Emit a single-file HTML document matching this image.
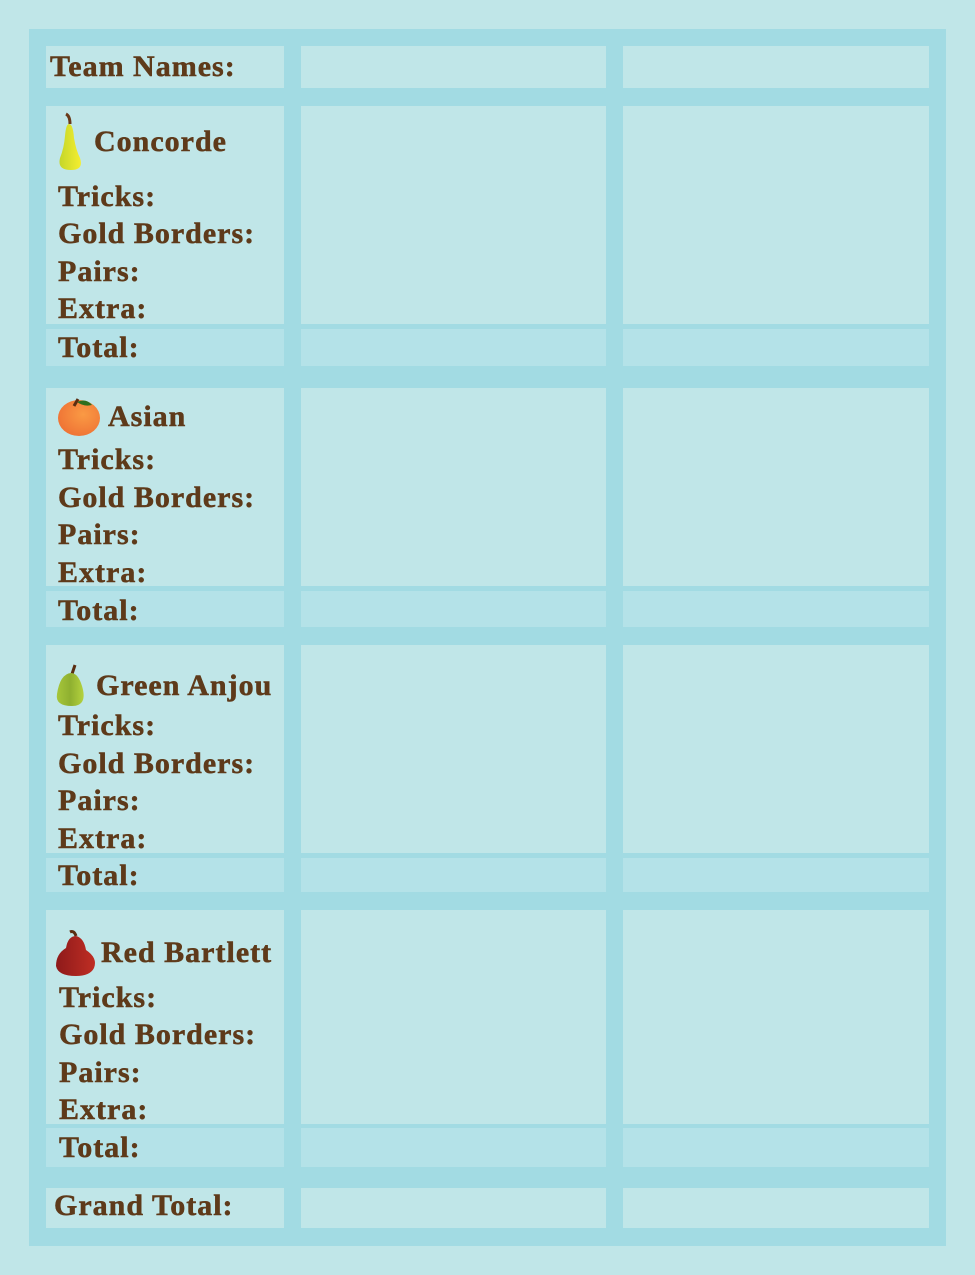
<!DOCTYPE html>
<html><head><style>
body{margin:0;width:975px;height:1275px;background:#c0e6e8;position:relative;overflow:hidden;font-family:"Liberation Serif",serif;font-weight:bold;color:#5e3a1a;}
.f{position:absolute;left:29px;top:29px;width:917px;height:1217px;background:#a2dbe3;}
.c{position:absolute;background:#c0e6e8;}
.t{position:absolute;background:#b4e2e8;}
.x{position:absolute;font-size:30px;line-height:32px;letter-spacing:1px;white-space:nowrap;-webkit-text-stroke:0.5px #5e3a1a;margin-top:2px;}
svg{position:absolute;}
</style></head><body>
<div class="f"></div>
<div class="c" style="left:46px;top:46px;width:238px;height:42px"></div>
<div class="c" style="left:301px;top:46px;width:305px;height:42px"></div>
<div class="c" style="left:623px;top:46px;width:306px;height:42px"></div>

<div class="c" style="left:46px;top:106px;width:238px;height:218px"></div>
<div class="c" style="left:301px;top:106px;width:305px;height:218px"></div>
<div class="c" style="left:623px;top:106px;width:306px;height:218px"></div>
<div class="t" style="left:46px;top:329px;width:238px;height:37px"></div>
<div class="t" style="left:301px;top:329px;width:305px;height:37px"></div>
<div class="t" style="left:623px;top:329px;width:306px;height:37px"></div>

<div class="c" style="left:46px;top:388px;width:238px;height:198px"></div>
<div class="c" style="left:301px;top:388px;width:305px;height:198px"></div>
<div class="c" style="left:623px;top:388px;width:306px;height:198px"></div>
<div class="t" style="left:46px;top:591px;width:238px;height:36px"></div>
<div class="t" style="left:301px;top:591px;width:305px;height:36px"></div>
<div class="t" style="left:623px;top:591px;width:306px;height:36px"></div>

<div class="c" style="left:46px;top:645px;width:238px;height:208px"></div>
<div class="c" style="left:301px;top:645px;width:305px;height:208px"></div>
<div class="c" style="left:623px;top:645px;width:306px;height:208px"></div>
<div class="t" style="left:46px;top:858px;width:238px;height:34px"></div>
<div class="t" style="left:301px;top:858px;width:305px;height:34px"></div>
<div class="t" style="left:623px;top:858px;width:306px;height:34px"></div>

<div class="c" style="left:46px;top:910px;width:238px;height:214px"></div>
<div class="c" style="left:301px;top:910px;width:305px;height:214px"></div>
<div class="c" style="left:623px;top:910px;width:306px;height:214px"></div>
<div class="t" style="left:46px;top:1128px;width:238px;height:39px"></div>
<div class="t" style="left:301px;top:1128px;width:305px;height:39px"></div>
<div class="t" style="left:623px;top:1128px;width:306px;height:39px"></div>

<div class="c" style="left:46px;top:1188px;width:238px;height:40px"></div>
<div class="c" style="left:301px;top:1188px;width:305px;height:40px"></div>
<div class="c" style="left:623px;top:1188px;width:306px;height:40px"></div>

<div class="x" style="left:50px;top:49px">Team Names:</div>

<svg style="left:54px;top:112px" width="34" height="62" viewBox="0 0 34 62">
<defs><linearGradient id="g1" x1="0" x2="1"><stop offset="0" stop-color="#c4d62a"/><stop offset="1" stop-color="#f5ee30"/></linearGradient></defs>
<path d="M12 2 Q16 4 16 12" stroke="#6a3a1a" stroke-width="3" fill="none"/>
<path d="M15 12 Q19 12 20 26 Q22 38 26 46 Q30 58 17 58 Q3 58 6 46 Q10 36 11 24 Q12 12 15 12Z" fill="url(#g1)"/>
</svg>
<div class="x" style="left:94px;top:124px">Concorde</div>
<div class="x" style="left:58px;top:179px">Tricks:</div>
<div class="x" style="left:58px;top:216px">Gold Borders:</div>
<div class="x" style="left:58px;top:254px">Pairs:</div>
<div class="x" style="left:58px;top:291px">Extra:</div>
<div class="x" style="left:58px;top:330px">Total:</div>

<svg style="left:56px;top:396px" width="46" height="42" viewBox="0 0 46 42">
<defs><radialGradient id="g2" cx="0.6" cy="0.4" r="0.7"><stop offset="0" stop-color="#fa9a44"/><stop offset="1" stop-color="#ee7034"/></radialGradient></defs>
<ellipse cx="23" cy="22" rx="21" ry="18" fill="url(#g2)"/>
<path d="M21 6 Q30 2 36 9 Q28 11 21 6Z" fill="#2f6e1e"/>
<path d="M18 10 L22 3" stroke="#5a2e12" stroke-width="3"/>
</svg>
<div class="x" style="left:108px;top:399px">Asian</div>
<div class="x" style="left:58px;top:442px">Tricks:</div>
<div class="x" style="left:58px;top:480px">Gold Borders:</div>
<div class="x" style="left:58px;top:517px">Pairs:</div>
<div class="x" style="left:58px;top:555px">Extra:</div>
<div class="x" style="left:58px;top:593px">Total:</div>

<svg style="left:52px;top:662px" width="40" height="46" viewBox="0 0 40 46">
<defs><linearGradient id="g3" x1="0" x2="1"><stop offset="0" stop-color="#a6c63a"/><stop offset="0.5" stop-color="#8fb030"/><stop offset="1" stop-color="#b4d23e"/></linearGradient></defs>
<path d="M20 12 L23 3" stroke="#5a2e12" stroke-width="3"/>
<path d="M19 11 Q26 11 30 24 Q36 44 20 44 Q3 44 5 32 Q8 12 19 11Z" fill="url(#g3)"/>
</svg>
<div class="x" style="left:96px;top:668px">Green Anjou</div>
<div class="x" style="left:58px;top:708px">Tricks:</div>
<div class="x" style="left:58px;top:746px">Gold Borders:</div>
<div class="x" style="left:58px;top:783px">Pairs:</div>
<div class="x" style="left:58px;top:821px">Extra:</div>
<div class="x" style="left:58px;top:858px">Total:</div>

<svg style="left:54px;top:928px" width="46" height="50" viewBox="0 0 46 50">
<defs><linearGradient id="g4" x1="0" x2="1"><stop offset="0" stop-color="#8e1a1a"/><stop offset="1" stop-color="#bf2e24"/></linearGradient></defs>
<path d="M16 4 Q20 2 22 8" stroke="#5a2e12" stroke-width="3" fill="none"/>
<path d="M22 8 Q30 10 32 22 Q44 30 40 40 Q36 48 22 48 Q4 48 2 38 Q2 26 12 20 Q14 8 22 8Z" fill="url(#g4)"/>
</svg>
<div class="x" style="left:101px;top:935px">Red Bartlett</div>
<div class="x" style="left:59px;top:980px">Tricks:</div>
<div class="x" style="left:59px;top:1017px">Gold Borders:</div>
<div class="x" style="left:59px;top:1055px">Pairs:</div>
<div class="x" style="left:59px;top:1092px">Extra:</div>
<div class="x" style="left:59px;top:1130px">Total:</div>

<div class="x" style="left:54px;top:1188px">Grand Total:</div>
</body></html>
